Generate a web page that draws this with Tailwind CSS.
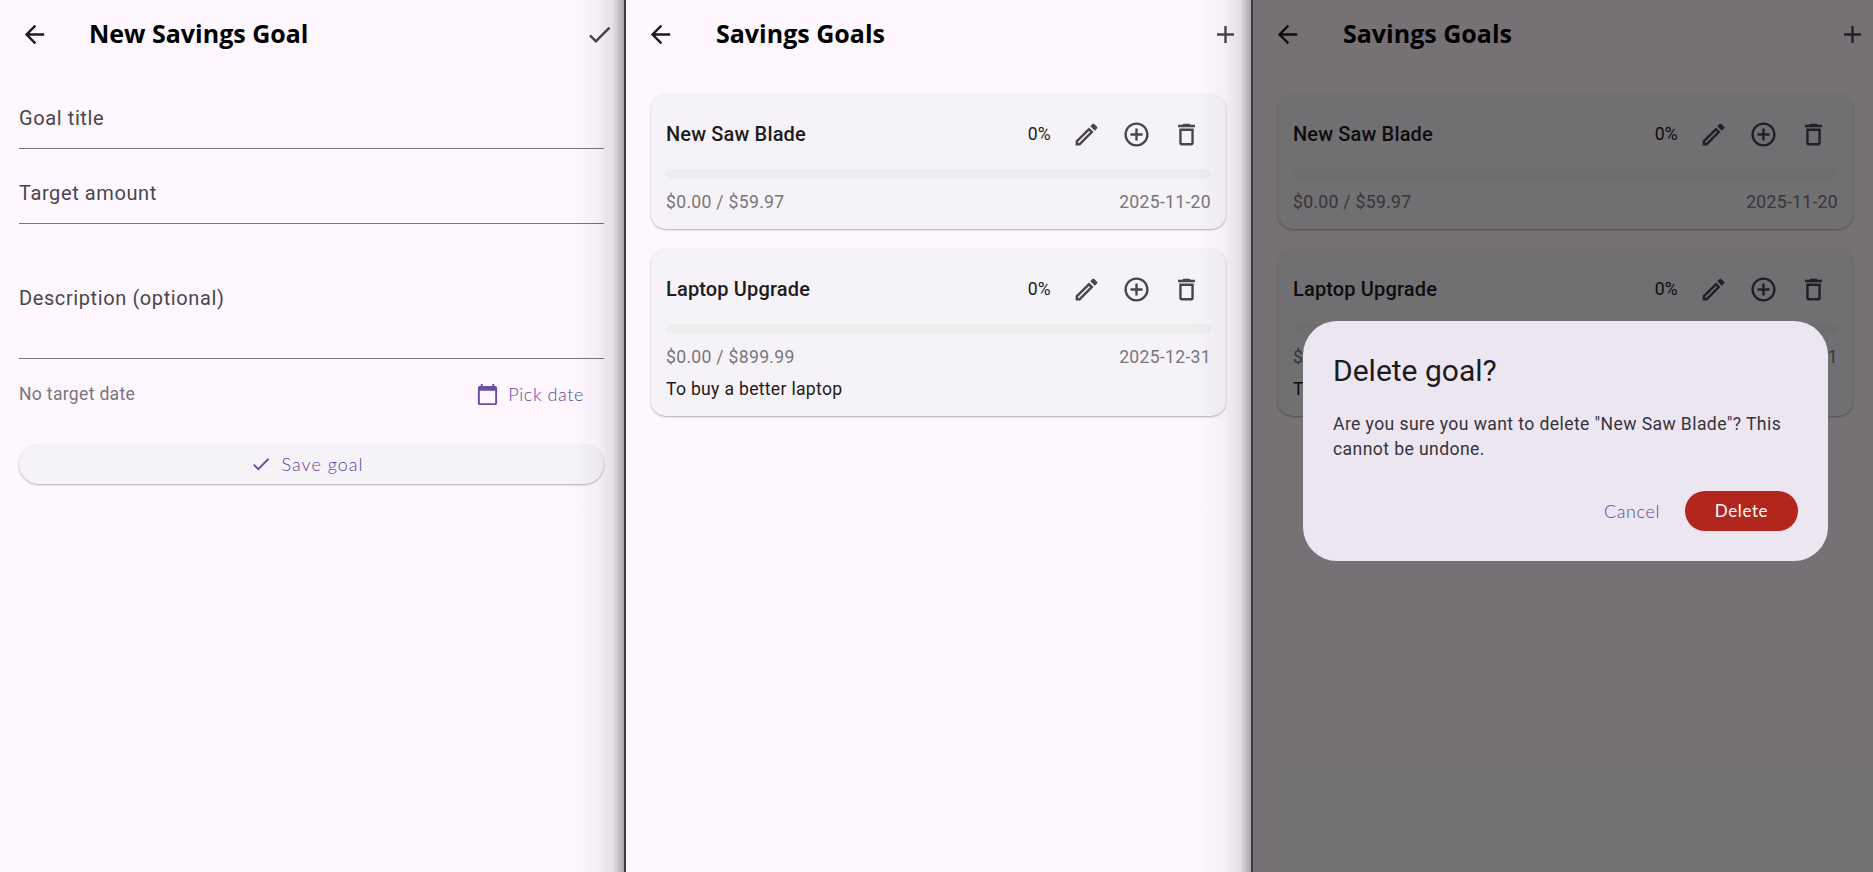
<!DOCTYPE html>
<html lang="en">
<head>
  <meta charset="UTF-8" />
  <title>Savings Goals</title>
  <script src="https://cdn.jsdelivr.net/npm/@tailwindcss/browser@4"></script>
</head>
<body class="bg-[#fef7ff] font-[family-name:Roboto,sans-serif] h-[872px] w-[1873px] overflow-hidden">
<div class="flex h-[872px]">

  <!-- New goal form -->
  <div class="relative w-[624px] shrink-0 h-full bg-[#fef7ff]">
    <div class="h-[68px] flex items-center justify-between pl-[20px] pr-[10px]">
      <div class="flex items-center">
        <svg class="w-[29px] h-[29px] fill-[#1d1b20]" viewBox="0 0 24 24"><path d="M20 11H7.83l5.59-5.59L12 4l-8 8 8 8 1.41-1.41L7.83 13H20v-2z"/></svg>
        <h1 class="ml-[40px] font-[family-name:'Open_Sans',sans-serif] font-bold text-[25px] text-black">New Savings Goal</h1>
      </div>
      <svg class="w-[29px] h-[29px] fill-[#49454f]" viewBox="0 0 24 24"><path d="M9 16.17L4.83 12l-1.42 1.41L9 19 21 7l-1.41-1.41z"/></svg>
    </div>
    <div class="pl-[19px] pr-[20px]">
      <div class="h-[81px] border-b border-[#79747e] flex items-end pb-[19px] text-[20px] leading-[22px] tracking-[.6px] text-[#49454f]">Goal title</div>
      <div class="h-[75px] border-b border-[#79747e] flex items-end pb-[19px] text-[20px] leading-[22px] tracking-[.6px] text-[#49454f]">Target amount</div>
      <div class="h-[135px] border-b border-[#79747e] pt-[63px] text-[20px] leading-[22px] tracking-[.6px] text-[#49454f]">Description (optional)</div>
      <div class="mt-[15px] h-[40px] flex items-center justify-between">
        <span class="text-[17.6px] tracking-[.3px] text-[#79767b]">No target date</span>
        <div class="flex items-center pr-[20px] text-[#6750a4]">
          <svg class="w-[23px] h-[23px] fill-[#6750a4]" viewBox="0 0 24 24"><path d="M20 3h-1V1h-2v2H7V1H5v2H4c-1.1 0-2 .9-2 2v16c0 1.1.9 2 2 2h16c1.1 0 2-.9 2-2V5c0-1.1-.9-2-2-2zm0 18H4V8h16v13z"/></svg>
          <span class="ml-[9px] font-[family-name:Lato,sans-serif] font-light text-[18px] tracking-[.6px] text-[#5c44a0]">Pick date</span>
        </div>
      </div>
      <div class="mt-[30px] h-[40px] pr-[10px] rounded-[20px] bg-[#f5f2f8] shadow-[0_1px_2px_rgba(0,0,0,0.3)] flex items-center justify-center">
        <svg class="w-[22px] h-[22px] fill-[#6750a4]" viewBox="0 0 24 24"><path d="M9 16.17L4.83 12l-1.42 1.41L9 19 21 7l-1.41-1.41z"/></svg>
        <span class="ml-[10px] font-[family-name:Lato,sans-serif] font-light text-[18px] tracking-[1px] text-[#5c44a0]">Save goal</span>
      </div>
    </div>
    <div class="absolute top-0 bottom-0 right-0 w-[54px] bg-[linear-gradient(to_right,transparent,rgba(0,0,0,0.03)_50%,rgba(0,0,0,0.1)_80%,rgba(0,0,0,0.33))]"></div>
  </div>
  <div class="w-[2px] shrink-0 bg-[#3d3d40]"></div>

  <!-- Goals list -->
  <div class="relative w-[625px] shrink-0 h-full bg-[#fef7ff]">
    <div class="h-[68px] flex items-center justify-between pl-[20px] pr-[11px]">
      <div class="flex items-center">
        <svg class="w-[29px] h-[29px] fill-[#1d1b20]" viewBox="0 0 24 24"><path d="M20 11H7.83l5.59-5.59L12 4l-8 8 8 8 1.41-1.41L7.83 13H20v-2z"/></svg>
        <h1 class="ml-[41px] font-[family-name:'Open_Sans',sans-serif] font-bold text-[25px] text-black">Savings Goals</h1>
      </div>
      <svg class="w-[29px] h-[29px] fill-[#49454f]" viewBox="0 0 24 24"><path d="M19 13h-6v6h-2v-6H5v-2h6V5h2v6h6v2z"/></svg>
    </div>
    <div class="pt-[26px] pl-[25px] pr-[25px] flex flex-col gap-[20px]">
      <div class="rounded-[15px] bg-[#f5f2f8] shadow-[0_1px_2px_rgba(0,0,0,0.3)] px-[15px] pt-[16px] pb-[16px]">
        <div class="h-[48px] flex items-center">
          <span class="flex-1 font-medium text-[20px] tracking-[.15px] text-[#1d1b20]">New Saw Blade</span>
          <span class="mr-[10px] text-[17.6px] tracking-[.25px] text-[#1d1b20]">0%</span>
          <div class="w-[50px] flex justify-center"><svg class="w-[29px] h-[29px] fill-[#49454f]" viewBox="0 0 24 24"><path d="M14.06 9.02l.92.92L5.92 19H5v-.92l9.06-9.06M17.66 3c-.25 0-.51.1-.7.29l-1.83 1.83 3.75 3.75 1.83-1.83c.39-.39.39-1.02 0-1.41l-2.34-2.34c-.2-.2-.45-.29-.71-.29zm-3.6 3.19L3 17.25V21h3.75L17.81 9.94l-3.75-3.75z"/></svg></div>
          <div class="w-[50px] flex justify-center"><svg class="w-[29px] h-[29px] fill-[#49454f]" viewBox="0 0 24 24"><path d="M13 7h-2v4H7v2h4v4h2v-4h4v-2h-4V7zm-1-5C6.48 2 2 6.48 2 12s4.48 10 10 10 10-4.48 10-10S17.52 2 12 2zm0 18c-4.41 0-8-3.59-8-8s3.59-8 8-8 8 3.59 8 8-3.59 8-8 8z"/></svg></div>
          <div class="w-[50px] flex justify-center"><svg class="w-[29px] h-[29px] fill-[#49454f]" viewBox="0 0 24 24"><path d="M6 19c0 1.1.9 2 2 2h8c1.1 0 2-.9 2-2V7H6v12zM8 9h8v10H8V9zm7.5-5l-1-1h-5l-1 1H5v2h14V4z"/></svg></div>
        </div>
        <div class="mt-[11px] h-[10px] rounded-full bg-[#eeeeee]"></div>
        <div class="mt-[12px] flex justify-between leading-[22px] text-[17.6px] tracking-[.3px] text-[#79767b]"><span>$0.00 / $59.97</span><span>2025-11-20</span></div>
      </div>
      <div class="rounded-[15px] bg-[#f5f2f8] shadow-[0_1px_2px_rgba(0,0,0,0.3)] px-[15px] pt-[16px] pb-[16px]">
        <div class="h-[48px] flex items-center">
          <span class="flex-1 font-medium text-[20px] tracking-[.15px] text-[#1d1b20]">Laptop Upgrade</span>
          <span class="mr-[10px] text-[17.6px] tracking-[.25px] text-[#1d1b20]">0%</span>
          <div class="w-[50px] flex justify-center"><svg class="w-[29px] h-[29px] fill-[#49454f]" viewBox="0 0 24 24"><path d="M14.06 9.02l.92.92L5.92 19H5v-.92l9.06-9.06M17.66 3c-.25 0-.51.1-.7.29l-1.83 1.83 3.75 3.75 1.83-1.83c.39-.39.39-1.02 0-1.41l-2.34-2.34c-.2-.2-.45-.29-.71-.29zm-3.6 3.19L3 17.25V21h3.75L17.81 9.94l-3.75-3.75z"/></svg></div>
          <div class="w-[50px] flex justify-center"><svg class="w-[29px] h-[29px] fill-[#49454f]" viewBox="0 0 24 24"><path d="M13 7h-2v4H7v2h4v4h2v-4h4v-2h-4V7zm-1-5C6.48 2 2 6.48 2 12s4.48 10 10 10 10-4.48 10-10S17.52 2 12 2zm0 18c-4.41 0-8-3.59-8-8s3.59-8 8-8 8 3.59 8 8-3.59 8-8 8z"/></svg></div>
          <div class="w-[50px] flex justify-center"><svg class="w-[29px] h-[29px] fill-[#49454f]" viewBox="0 0 24 24"><path d="M6 19c0 1.1.9 2 2 2h8c1.1 0 2-.9 2-2V7H6v12zM8 9h8v10H8V9zm7.5-5l-1-1h-5l-1 1H5v2h14V4z"/></svg></div>
        </div>
        <div class="mt-[11px] h-[10px] rounded-full bg-[#eeeeee]"></div>
        <div class="mt-[12px] flex justify-between leading-[22px] text-[17.6px] tracking-[.3px] text-[#79767b]"><span>$0.00 / $899.99</span><span>2025-12-31</span></div>
        <div class="mt-[10px] leading-[22px] text-[17.6px] tracking-[.3px] text-[#1d1b20]">To buy a better laptop</div>
      </div>
    </div>
    <div class="absolute top-0 bottom-0 right-0 w-[54px] bg-[linear-gradient(to_right,transparent,rgba(0,0,0,0.03)_50%,rgba(0,0,0,0.1)_80%,rgba(0,0,0,0.33))]"></div>
  </div>
  <div class="w-[2px] shrink-0 bg-[#3d3d40]"></div>

  <!-- Goals list with delete dialog -->
  <div class="relative w-[625px] shrink-0 h-full bg-[#fef7ff]">
    <div class="h-[68px] flex items-center justify-between pl-[20px] pr-[11px]">
      <div class="flex items-center">
        <svg class="w-[29px] h-[29px] fill-[#1d1b20]" viewBox="0 0 24 24"><path d="M20 11H7.83l5.59-5.59L12 4l-8 8 8 8 1.41-1.41L7.83 13H20v-2z"/></svg>
        <h1 class="ml-[41px] font-[family-name:'Open_Sans',sans-serif] font-bold text-[25px] text-black">Savings Goals</h1>
      </div>
      <svg class="w-[29px] h-[29px] fill-[#49454f]" viewBox="0 0 24 24"><path d="M19 13h-6v6h-2v-6H5v-2h6V5h2v6h6v2z"/></svg>
    </div>
    <div class="pt-[26px] pl-[25px] pr-[25px] flex flex-col gap-[20px]">
      <div class="rounded-[15px] bg-[#f5f2f8] shadow-[0_1px_2px_rgba(0,0,0,0.3)] px-[15px] pt-[16px] pb-[16px]">
        <div class="h-[48px] flex items-center">
          <span class="flex-1 font-medium text-[20px] tracking-[.15px] text-[#1d1b20]">New Saw Blade</span>
          <span class="mr-[10px] text-[17.6px] tracking-[.25px] text-[#1d1b20]">0%</span>
          <div class="w-[50px] flex justify-center"><svg class="w-[29px] h-[29px] fill-[#49454f]" viewBox="0 0 24 24"><path d="M14.06 9.02l.92.92L5.92 19H5v-.92l9.06-9.06M17.66 3c-.25 0-.51.1-.7.29l-1.83 1.83 3.75 3.75 1.83-1.83c.39-.39.39-1.02 0-1.41l-2.34-2.34c-.2-.2-.45-.29-.71-.29zm-3.6 3.19L3 17.25V21h3.75L17.81 9.94l-3.75-3.75z"/></svg></div>
          <div class="w-[50px] flex justify-center"><svg class="w-[29px] h-[29px] fill-[#49454f]" viewBox="0 0 24 24"><path d="M13 7h-2v4H7v2h4v4h2v-4h4v-2h-4V7zm-1-5C6.48 2 2 6.48 2 12s4.48 10 10 10 10-4.48 10-10S17.52 2 12 2zm0 18c-4.41 0-8-3.59-8-8s3.59-8 8-8 8 3.59 8 8-3.59 8-8 8z"/></svg></div>
          <div class="w-[50px] flex justify-center"><svg class="w-[29px] h-[29px] fill-[#49454f]" viewBox="0 0 24 24"><path d="M6 19c0 1.1.9 2 2 2h8c1.1 0 2-.9 2-2V7H6v12zM8 9h8v10H8V9zm7.5-5l-1-1h-5l-1 1H5v2h14V4z"/></svg></div>
        </div>
        <div class="mt-[11px] h-[10px] rounded-full bg-[#eeeeee]"></div>
        <div class="mt-[12px] flex justify-between leading-[22px] text-[17.6px] tracking-[.3px] text-[#79767b]"><span>$0.00 / $59.97</span><span>2025-11-20</span></div>
      </div>
      <div class="rounded-[15px] bg-[#f5f2f8] shadow-[0_1px_2px_rgba(0,0,0,0.3)] px-[15px] pt-[16px] pb-[16px]">
        <div class="h-[48px] flex items-center">
          <span class="flex-1 font-medium text-[20px] tracking-[.15px] text-[#1d1b20]">Laptop Upgrade</span>
          <span class="mr-[10px] text-[17.6px] tracking-[.25px] text-[#1d1b20]">0%</span>
          <div class="w-[50px] flex justify-center"><svg class="w-[29px] h-[29px] fill-[#49454f]" viewBox="0 0 24 24"><path d="M14.06 9.02l.92.92L5.92 19H5v-.92l9.06-9.06M17.66 3c-.25 0-.51.1-.7.29l-1.83 1.83 3.75 3.75 1.83-1.83c.39-.39.39-1.02 0-1.41l-2.34-2.34c-.2-.2-.45-.29-.71-.29zm-3.6 3.19L3 17.25V21h3.75L17.81 9.94l-3.75-3.75z"/></svg></div>
          <div class="w-[50px] flex justify-center"><svg class="w-[29px] h-[29px] fill-[#49454f]" viewBox="0 0 24 24"><path d="M13 7h-2v4H7v2h4v4h2v-4h4v-2h-4V7zm-1-5C6.48 2 2 6.48 2 12s4.48 10 10 10 10-4.48 10-10S17.52 2 12 2zm0 18c-4.41 0-8-3.59-8-8s3.59-8 8-8 8 3.59 8 8-3.59 8-8 8z"/></svg></div>
          <div class="w-[50px] flex justify-center"><svg class="w-[29px] h-[29px] fill-[#49454f]" viewBox="0 0 24 24"><path d="M6 19c0 1.1.9 2 2 2h8c1.1 0 2-.9 2-2V7H6v12zM8 9h8v10H8V9zm7.5-5l-1-1h-5l-1 1H5v2h14V4z"/></svg></div>
        </div>
        <div class="mt-[11px] h-[10px] rounded-full bg-[#eeeeee]"></div>
        <div class="mt-[12px] flex justify-between leading-[22px] text-[17.6px] tracking-[.3px] text-[#79767b]"><span>$0.00 / $899.99</span><span>2025-12-31</span></div>
        <div class="mt-[10px] leading-[22px] text-[17.6px] tracking-[.3px] text-[#1d1b20]">To buy a better laptop</div>
      </div>
    </div>
    <!-- scrim -->
    <div class="absolute inset-0 bg-black/54"></div>
    <!-- dialog -->
    <div class="absolute top-[321px] left-[50px] w-[525px] h-[240px] rounded-[34px] bg-[#ece6f0] pl-[30px] pr-[30px] pt-[32px]">
      <div class="h-[36px] leading-[36px] text-[30px] text-[#1d1b20]">Delete goal?</div>
      <p class="mt-[23px] leading-[25px] text-[17.6px] tracking-[.4px] text-[#36333b]">Are you sure you want to delete "New Saw Blade"? This cannot be undone.</p>
      <div class="mt-[29px] flex items-center justify-end">
        <span class="mr-[25px] font-[family-name:Lato,sans-serif] font-light text-[18px] tracking-[.6px] text-[#5c44a0]">Cancel</span>
        <div class="w-[113px] h-[40px] rounded-[20px] bg-[#b3261e] flex items-center justify-center font-[family-name:Lato,sans-serif] text-[17px] tracking-[.6px] text-white">Delete</div>
      </div>
    </div>
  </div>

</div>
</body>
</html>
